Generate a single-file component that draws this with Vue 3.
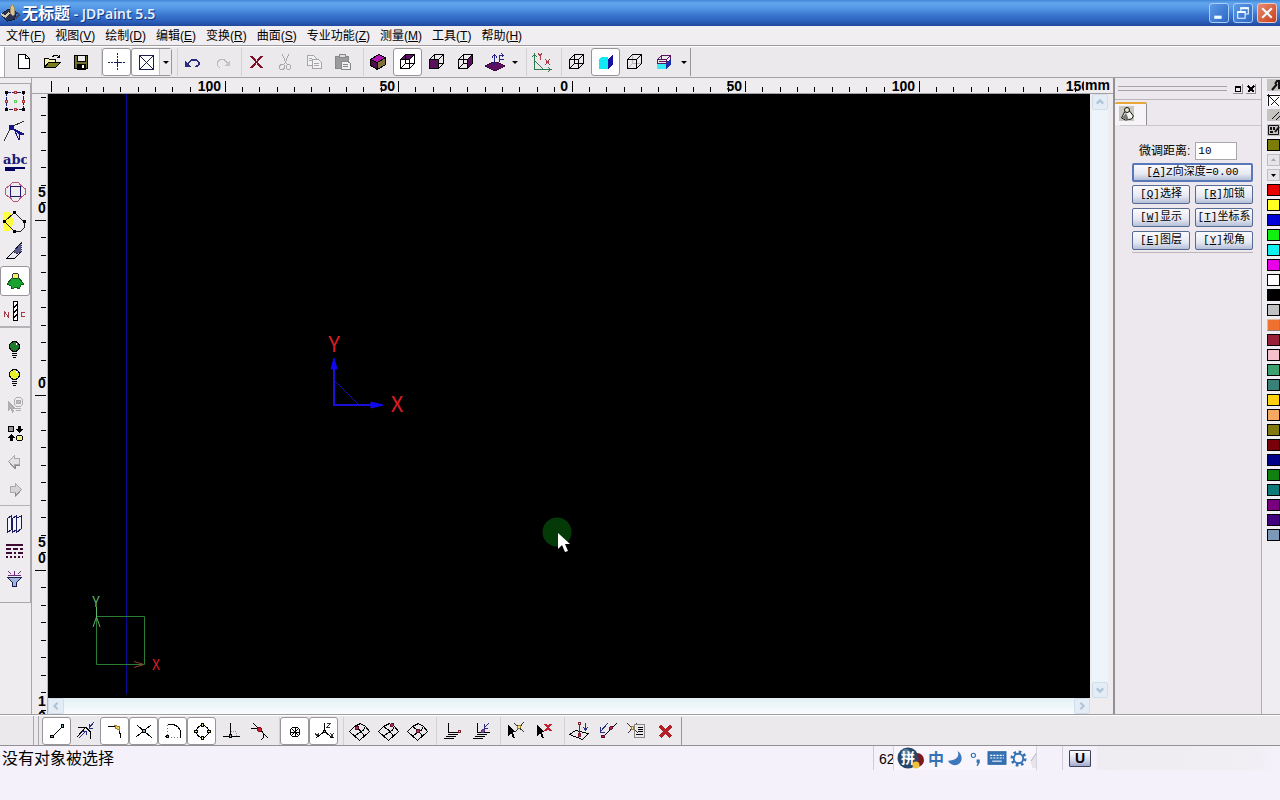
<script setup>
import { ref } from 'vue'

const menus = [
  ['文件', 'F'], ['视图', 'V'], ['绘制', 'D'], ['编辑', 'E'], ['变换', 'R'],
  ['曲面', 'S'], ['专业功能', 'Z'], ['测量', 'M'], ['工具', 'T'], ['帮助', 'H'],
]

const wire = '<path d="M4.5 9.5h9v9h-9zM9.5 4.5h9v9h-9zM4.5 9.5l5-5M13.5 9.5l5-5M13.5 18.5l5-5M4.5 18.5l5-5"/>'
const grid = '<path d="M2.5 12.5l5-5 6-3 5 3 4 5-10 9zM7.5 17l9-6 2-3.500M17.500 17l-5-6-5-3.500"/>'
const plates = '<path d="M8.500 13.500h12M7.500 15.500h10M5.500 17.500h10M3.500 19.500h10"/>'
const arrow = '<path d="M4 6v11l3-3 2 5h2l-2-6h3z" fill="#000" stroke="none"/>'

const icons = {
  app: '<path d="M3 12l6-4 9 3-2 8-8 2-5-5z" fill="#2a3350" stroke="#111a33"/><path d="M11 5l3-2 2 3v8l-2 1-3-3z" fill="#d9c48a" stroke="#8c8670"/><path d="M1 13l5 3 4-4" stroke="#d9c9a4" stroke-width="2"/><path d="M18 11l3 3-4 4" stroke="#3b4868" stroke-width="2"/>',
  new: '<path d="M6.500 4.500h7l4 4v10h-11z" fill="#fff"/><path d="M13.500 4.500v4h4"/>',
  open: '<path d="M3.500 17.500v-9h4l1 1h6v3" fill="#f3f0b0"/><path d="M3.500 17.500l4-5h12l-5 5z" fill="#7c7c20"/><path d="M11.500 6.500l2-1h3l2 2M18.500 4.500v3h-3"/>',
  save: '<path d="M4.500 5.500h13v13h-13z" fill="#6f6f2e"/><path d="M7.500 5.500h8v6h-8z" fill="#eee"/><path d="M7 14h8v5H7z" fill="#000"/><path d="M12 15h2v3h-2z" fill="#fff" stroke="none"/>',
  cross: '<g stroke="#1b2050"><path d="M3 12.500h18M12.500 3v18" stroke-dasharray="2 1"/><path d="M8.500 12.500h8M12.500 8.500v8"/></g>',
  boxx: '<path d="M5.500 5.500h14v14h-14zM5.500 5.500l14 14M19.500 5.500l-14 14" stroke="#1b2050"/>',
  undo: '<path d="M7 13l4-4h4l3 3v3l-3 2" stroke="#2a2c80"/><path d="M7 14l4-4h4l2 2v3l-3 2" stroke="#2a2c80"/><path d="M4 10v7h6z" fill="#2a2c80" stroke="none"/>',
  redo: '<path d="M10 17.500l-3-2v-3l3-3h4l4 4" stroke="#b9b9c2"/><path d="M20 10v6h-6z" fill="#c4c4cc" stroke="none"/>',
  del: '<path d="M6 6l11 12M17 6L6 18" stroke="#7b1026" stroke-width="2"/>',
  cut: '<g stroke="#a9a9ad"><path d="M8.500 4.500l4 10M14.500 4.500l-4 10"/><circle cx="8" cy="17" r="2.500"/><circle cx="14.500" cy="17" r="2.500"/></g>',
  copy: '<g stroke="#a5a5a9" fill="#f3f2f4"><path d="M4.500 5.500h6l3 3v7h-9z"/><path d="M9.500 9.500h6l3 3v6h-9z"/><path d="M6 8.500h3M6 10.500h3M11 13.500h5M11 15.500h5"/></g>',
  paste: '<path d="M3.500 6.500h13v12h-13z" fill="#9b9b9d" stroke="#888"/><path d="M7 4.500h6v3H7z" fill="#ddd" stroke="#888"/><path d="M9.500 11.500h6l3 2v6h-9z" fill="#f0f0f2" stroke="#888"/><path d="M11 14.500h5M11 16.500h5" stroke="#888"/>',
  solid: '<path d="M3.500 9.500l8-5 7 3v7l-8 5-7-4z" fill="#4a0b4a"/><path d="M3.500 9.500l8-5 7 3-8 5z" fill="#b019b0"/><path d="M10.500 12.500l8-5v7l-8 5z" fill="#84703a"/>',
  ctop: '<path d="M4.500 9.500l5-5h9l-5 5z" fill="#5b1060"/>' + wire,
  cfront: wire + '<path d="M4.500 9.500h9v9h-9z" fill="#5b1060"/>',
  cright: wire + '<path d="M13.500 9.500l5-5v9l-5 5z" fill="#5b1060"/>',
  plane: '<path d="M2 16l8-4h4l8 4-10 5z" fill="#5b1060" stroke="#3a0a40"/><path d="M11.500 15V5M9 7.500l2.500-3 2.500 3M16.500 12V5.500h4M18.500 3.500l2 2-2 2M17 9.500h4" stroke="#23238a"/>',
  axes: '<path d="M4.500 4v15.500h16M2.500 7l2-3 2 3M18 17.500l3 2-3 2M4.500 10.500l9 9" stroke="#2c7a4c"/><path d="M8 3l2 3 2-3M10 6v4M15 9l5 6M20 9l-5 6" stroke="#b13a4a"/>',
  cwire: wire,
  shaded: '<path d="M5 9l3-2h6v12H5z" fill="#10e8f5" stroke="none"/><path d="M14 9l5-5v10l-5 5z" fill="#1414a0" stroke="none"/>',
  hidden: '<path d="M9.500 5v8.500h9M4.500 18.500l5-5" stroke="#b9b9bd"/><path d="M4.500 9.500h9v9h-9zM9.500 4.500h9v9M4.500 9.500l5-5M13.500 9.500l5-5M13.500 18.500l5-5"/>',
  render: '<path d="M5 14h9v5H5z" fill="#35ecf5" stroke="none"/><path d="M5.500 9.500h9v4h-9zM5.500 9.500l4-4h9l-4 4M9.500 5.500v4M18.500 5.500v4l-4 4M7 11.500h10" stroke="#5a1560"/><path d="M14.500 13.500l4-4v5l-4 4z" fill="#1a2eb0" stroke="#1a2eb0"/>',
  select: '<path d="M3.500 3.500h17v17h-17z" stroke="#1b1b70" stroke-dasharray="4 1"/><path d="M11.500 11.500h2v2h-2z" stroke="#5bd45b"/><g fill="#000"><path d="M2.500 2.500h2v2h-2zM19.500 2.500h2v2h-2zM2.500 19.500h2v2h-2zM19.500 19.500h2v2h-2z"/></g><path d="M11.500 2.500h2v2h-2zM11.500 19.500h2v2h-2zM2.500 11.500h2v2h-2zM19.500 11.500h2v2h-2z" fill="#fbb" stroke="#a33"/>',
  node: '<path d="M1 22l7-14 13-6" stroke="#333"/><path d="M6 6h4v4H6z" fill="#15158a" stroke="#15158a"/><path d="M11 10l10 5-4 1-1 5z" fill="#dde" stroke="#15158a"/><path d="M12 11l9 4-4 1z" fill="#15158a" stroke="#15158a"/>',
  abc: '<text x="0" y="15" class="abc">abc</text><path d="M2 18.500h20M2 20.500h10" stroke="#000060" stroke-width="2"/>',
  shape: '<path d="M7.500 7.500h10v10h-10z" stroke="#1b1b70"/><path d="M7 6.500l3-3.500h5l3 3.500 4 3v6l-4 3-3 3.500h-5l-3-3.500-5-3v-6z" stroke="#c0507c"/>',
  edit: '<path d="M0 3h7l4 10-4 9H0z" fill="#ffff3c" stroke="none"/><path d="M1.500 12.500l10-9 10 10v5l-4 4h-6l-10-10" stroke="#222"/><path d="M10 2h3v3h-3zM0 11h3v3H0zM20 11h3v3h-3zM10 21h3v3h-3z" fill="#000" stroke="none"/>',
  surf: '<path d="M3.500 19.500l7-7 7-8v9l-6 6z" fill="#e8e8f4"/><path d="M10 13l8-9v9l-4 2z" fill="#5a5a90" stroke="#223" stroke-dasharray="1 1"/>',
  relief: '<path d="M4 15l6-7h5l6 7-3 1-2 4-3-2-4 2-1-3z" fill="#17a32d" stroke="#0a5c18"/><circle cx="12.500" cy="7" r="3" fill="#f8f060" stroke="#333"/>',
  nc: '<path d="M10.500 2.500h4v19h-4z" fill="#fff"/><path d="M10.500 9l4-4M10.500 14l4-4M10.500 19l4-4" stroke-width="2"/><path d="M1.500 18v-5l4 5v-5M22 13.500h-4v4h4" stroke="#a33b48"/>',
  bulb1: '<circle cx="11.500" cy="9.500" r="5" fill="#1f7a2c"/><path d="M13 6v2" stroke="#fff"/><path d="M9 16.500h5M9 18.500h5M10 20.500h3"/>',
  bulb2: '<circle cx="11.500" cy="9.500" r="5" fill="#e9f02a"/><path d="M13 6v2" stroke="#fff"/><path d="M9 16.500h5M9 18.500h5M10 20.500h3"/>',
  bulb3: '<g stroke="#adadb0"><circle cx="15.500" cy="9" r="4.500"/><circle cx="15.500" cy="9" r="2" fill="#bbb"/><path d="M13 15.500h5M13 17.500h5"/><path d="M5.500 9v8l2-2 2 4 1-1-2-3h3z" fill="#b2b2b4"/></g>',
  swap: '<circle cx="8" cy="8" r="3" fill="#999"/><circle cx="16.500" cy="17" r="3" fill="#f0ef80"/><path d="M15 5h3v3h2l-3.500 4L13 8h2zM7 20h3v-3h2l-3.500-4L5 17h2z" fill="#000" stroke="none"/>',
  left: '<path d="M5.500 12.500l6-6v3h5v6h-5v4z" fill="#e2e2e4" stroke="#aaa"/><path d="M6 13l6 6v-3h5" stroke="#888"/>',
  right: '<path d="M18.500 12.500l-6-6v3h-5v6h5v4z" fill="#d5d5d8" stroke="#aaa"/><path d="M18 13l-6 6v-3" stroke="#888"/>',
  layers: '<path d="M4.500 7.500l4-3v14l-4 3zM9.500 7.500l4-3v14l-4 3zM13.500 7.500l5-3v13l-5 4z" fill="#f4f4ff" stroke="#1b1b60"/>',
  dash: '<g stroke="#3d0a33" stroke-width="2"><path d="M3 6h17"/><path d="M3 10h17" stroke-dasharray="5 2"/><path d="M3 14h17" stroke-dasharray="6 2 2 2"/><path d="M3 18h17" stroke-dasharray="2 2"/></g>',
  filter: '<path d="M4.500 10.500h14l-5 5v4h-4v-4z" fill="#9fb6dd" stroke="#1b1b50"/><path d="M5.500 4l2 3M11.500 4v4M17.500 4l-2 3M5 8.500h13" stroke="#702a78"/>',
  line: '<path d="M7.500 17.500l10-10"/><circle cx="7" cy="17.500" r="1.500" fill="#8ab"/><circle cx="17.500" cy="7" r="1.500" fill="#8ab"/>',
  near: '<path d="M4 8.500h8l4 4v7M12 8l-9 10"/><path d="M20 3l-5 6M15 5v4h4M5 19l7-7M8 12h4v4" stroke="#2a2c80"/>',
  end: '<path d="M5 7.500h7l4 3 2 8"/><path d="M12 6.500l4 1 1 4-4-2z" fill="#f0d060" stroke="#9a7a20"/>',
  inter: '<path d="M5 6l15 13M4 18l15-12"/><path d="M10.500 10.500h3v3h-3z" fill="#8ab"/>',
  arc: '<path d="M6.500 5.500h6l4 2 3 4v7"/><path d="M6.500 6v11M7 18.500h12" stroke="#777" stroke-dasharray="1 2"/><circle cx="6.500" cy="17.500" r="1.500" fill="#8a8"/>',
  quad: '<circle cx="12.500" cy="12.500" r="6"/><g fill="#f8e68a"><circle cx="12.500" cy="6" r="1.500"/><circle cx="12.500" cy="19" r="1.500"/><circle cx="6" cy="12.500" r="1.500"/><circle cx="19" cy="12.500" r="1.500"/></g>',
  perp: '<path d="M11.500 4v12M4 17.500h17"/><path d="M12 12.500h5v5" stroke="#999" stroke-dasharray="1 1"/><circle cx="11.500" cy="17" r="1.500" fill="#8ab"/>',
  tang: '<path d="M5 4l15 15M3 9l9 1 3 4v5l-2 2"/><circle cx="11.500" cy="10.500" r="2" fill="#c02030" stroke="#801020"/>',
  centre: '<path d="M9.500 8.500h5l2 2v5l-2 2h-5l-2-2v-5zM9 10l6 6M15 10l-6 6M8 13h8M12 9v8"/>',
  xyz: '<path d="M12.500 4v8M12 13l-8 6M13 13l8 6"/><path d="M15 4.500h3l-3 4h3M3 14l2 3 2-3M18 14l4 5M22 14l-4 5" stroke="#333"/><circle cx="12.500" cy="12.500" r="1" fill="#8ab"/>',
  g1: grid + '<circle cx="10" cy="9" r="1.500" fill="#b03058" stroke="#601030"/>',
  g2: grid + '<circle cx="16" cy="6" r="1.500" fill="#b03058" stroke="#601030"/>',
  g3: grid + '<circle cx="13" cy="12" r="1.500" fill="#b03058" stroke="#601030"/>',
  p1: plates + '<path d="M8.500 4v9.500"/><path d="M18.500 11.500h2v2h-2z" fill="#ecc" stroke="#802030"/>',
  p2: plates + '<path d="M8.500 4v9.500"/><path d="M20 4l-5 5M15 5v4h4" stroke="#2a2c80"/><circle cx="14" cy="12" r="1.500" fill="#8a4a98" stroke="#503080"/>',
  s1: arrow + '<path d="M10 4l10 9M20 3l-9 10" stroke="#333"/><circle cx="15" cy="8" r="1.500" fill="#f8e68a" stroke="#a08020"/>',
  s2: arrow + '<path d="M12 5l6 7M18 5l-6 7" stroke="#c02030" stroke-width="2"/>',
  d1: '<path d="M1.500 15.500l6-4 13 3-6 6z"/><path d="M11.500 6v10" stroke="#802030"/><path d="M17.500 4v6M15 8l2.500 3 2.500-3" stroke="#2a2c80"/><path d="M10.500 3.500h2v2h-2z" stroke="#802030"/><circle cx="11.500" cy="16" r="1.500" fill="#c02050" stroke="#802030"/>',
  d2: '<path d="M5 19L20 4"/><path d="M11 4l-8 9M3 8v5h5" stroke="#2a2c80"/><circle cx="6" cy="17.500" r="1.500" fill="#c02050" stroke="#601030"/><circle cx="14" cy="9" r="1.500" fill="#c02050" stroke="#601030"/>',
  d3: '<path d="M1 4l11 10M11 4L2 14" stroke="#333"/><circle cx="6.500" cy="9" r="1.500" fill="#f8e68a" stroke="#a08020"/><path d="M8.500 5.500h10v13h-10z" stroke="#888"/><path d="M12 8.500h5M12 10.500h5M12 12.500h5M10 15.500h7"/>',
  d4: '<path d="M5 7l11 11M16 7L5 18" stroke="#b51f2a" stroke-width="4"/>',
}

const topGroups = [
  [['new', '新建'], ['open', '打开'], ['save', '保存']],
  [['cross', '十字光标', 'on'], ['boxx', '选择框', 'on', 'drop']],
  [['undo', '撤销'], ['redo', '重做']],
  [['del', '删除'], ['cut', '剪切'], ['copy', '复制'], ['paste', '粘贴']],
  [['solid', '轴测图'], ['ctop', '俯视图', 'on'], ['cfront', '前视图'], ['cright', '右视图'], ['plane', '绘图面', '', 'drop']],
  [['axes', '坐标系']],
  [['cwire', '线框'], ['shaded', '着色', 'on'], ['hidden', '消隐'], ['render', '渲染', '', 'drop']],
]
const leftA = [['select', '选择'], ['node', '节点'], ['abc', '文字'], ['shape', '图形'], ['edit', '修改'], ['surf', '曲面'], ['relief', '浮雕', 'on'], ['nc', '加工']]
const leftB = [['bulb1', '显示'], ['bulb2', '全部显示'], ['bulb3', '隐藏'], ['swap', '切换'], ['left', '后退'], ['right', '前进']]
const leftC = [['layers', '图层'], ['dash', '线型'], ['filter', '过滤']]
const snapGroups = [
  [['line', '端点', 'on'], ['near', '最近点'], ['end', '终点', 'on'], ['inter', '交点', 'on'], ['arc', '圆心', 'on'], ['quad', '象限点', 'on'], ['perp', '垂足'], ['tang', '切点']],
  [['centre', '中心', 'on'], ['xyz', '三维捕捉', 'on']],
  [['g1', '面边'], ['g2', '面角'], ['g3', '面心']],
  [['p1', '平面'], ['p2', '平面投影']],
  [['s1', '选取点'], ['s2', '取消选取']],
  [['d1', '投影'], ['d2', '线上点'], ['d3', '点列表'], ['d4', '关闭捕捉']],
]

const hTicks = Array.from({ length: 60 }, (_, i) => ({ x: Math.round(3 + 17.35 * i), major: i % 10 === 0 }))
const hLabels = ['100', '50', '0', '50', '100', '150'].map((t, i) => ({ t, x: Math.round(173 + 173.5 * i) }))
const vTicks = Array.from({ length: 60 }, (_, i) => ({ y: Math.round(3 + 17.5 * i), major: i % 10 === 7 }))
const vLabels = [['5', 103], ['0', 119], ['0', 294], ['5', 453], ['0', 469], ['1', 612], ['0', 627]]

const fine = ref('10')
const keys = [['Q', '选择'], ['R', '加锁'], ['W', '显示'], ['T', '坐标系'], ['E', '图层'], ['Y', '视角']]
const colours = [
  '#e80000', '#ffff20', '#0000d8', '#10f010', '#10f0f0', '#e800e8', '#ffffff', '#000000',
  '#c0c0c0', '#f07030', '#982038', '#f4c0cc', '#3ca070', '#388078', '#ffd010', '#f4a860',
  '#807810', '#780008', '#000088', '#108010', '#107878', '#780080', '#400080', '#7c98b8',
]
</script>

<template>
  <div class="app">
    <header class="title">
      <svg class="ic" viewBox="0 0 24 24" v-html="icons.app"></svg>
      <h1><span class="doc">无标题</span><span> - JDPaint 5.5</span></h1>
      <button class="win" aria-label="最小化"><svg viewBox="0 0 17 17"><path d="M4 12.500h7" stroke-width="3" /></svg></button>
      <button class="win" aria-label="还原"><svg viewBox="0 0 17 17"><path d="M3.500 7.500h7v6h-7zM6.500 7V3.500h7v6h-3" stroke-width="1" /><path d="M3 7.500h8M6 4h8" stroke-width="2" /></svg></button>
      <button class="win close" aria-label="关闭"><svg viewBox="0 0 17 17"><path d="M4 4l9 9M13 4l-9 9" stroke-width="2" /></svg></button>
    </header>

    <nav class="menus">
      <button v-for="m in menus" :key="m[1]">{{ m[0] }}(<u>{{ m[1] }}</u>)</button>
    </nav>

    <div class="bar top">
      <div v-for="(g, gi) in topGroups" :key="gi" class="group">
        <span v-for="b in g" :key="b[0]" class="cell" :class="{ on: b[2] }">
          <button class="tool" :aria-label="b[1]"><svg class="ic" viewBox="0 0 24 24" v-html="icons[b[0]]"></svg></button>
          <button v-if="b[3]" class="drop" :aria-label="b[1] + '选项'"><svg viewBox="0 0 12 24"><path d="M3 11h6l-3 3z" /></svg></button>
        </span>
      </div>
    </div>

    <main class="work">
      <aside class="side">
        <div class="tools">
          <div class="tall">
            <button v-for="b in leftA" :key="b[0]" class="tool" :class="{ on: b[2] }" :aria-label="b[1]"><svg class="ic" viewBox="0 0 24 24" v-html="icons[b[0]]"></svg></button>
          </div>
          <div class="short">
            <button v-for="b in leftB" :key="b[0]" class="tool" :aria-label="b[1]"><svg class="ic" viewBox="0 0 24 24" v-html="icons[b[0]]"></svg></button>
          </div>
          <div class="short last">
            <button v-for="b in leftC" :key="b[0]" class="tool" :aria-label="b[1]"><svg class="ic" viewBox="0 0 24 24" v-html="icons[b[0]]"></svg></button>
          </div>
        </div>
      </aside>

      <section class="view">
        <svg class="hruler">
          <line v-for="t in hTicks" :key="t.x" :x1="t.x + 0.5" :x2="t.x + 0.5" :y1="t.major ? 3 : 9" y2="14" />
          <text v-for="l in hLabels" :key="l.x" :x="l.x" y="13" text-anchor="end">{{ l.t }}</text>
        </svg>
        <span class="unit">mm</span>
        <svg class="vruler">
          <line v-for="t in vTicks" :key="t.y" :x1="t.major ? 3 : 9" x2="14" :y1="t.y + 0.5" :y2="t.y + 0.5" />
          <text v-for="l in vLabels" :key="l[1]" x="10" :y="l[1]" text-anchor="middle">{{ l[0] }}</text>
        </svg>
        <div class="canvas">
          <svg class="scene">
            <line x1="78.500" x2="78.500" y1="0" y2="600" stroke="#0a0a98" />
            <g fill="none" stroke="#1c10d8" stroke-width="2">
              <path d="M286 268v43h44" />
              <path d="M286 286l25 25" stroke="#1a10b8" stroke-width="1" />
              <path d="M286 264l3 11h-6zM335 311l-12-3v6z" fill="#1008f0" stroke="#1008f0" stroke-width="1" />
            </g>
            <text x="286" y="258" class="big">Y</text>
            <text x="349" y="318" class="big">X</text>
            <path d="M48.500 522.500h48v48h-48z" fill="none" stroke="#2c7c34" />
            <path d="M45 533l3.500-10 3.500 10" fill="none" stroke="#5cb86a" />
            <path d="M86 567.500l10 3-10 3" fill="none" stroke="#90402c" />
            <path d="M48.500 513v10" stroke="#5cb86a" />
            <text x="48" y="513" class="small green">Y</text>
            <text x="108" y="576" class="small">X</text>
            <circle cx="509" cy="438" r="14.500" fill="#043a08" />
            <path d="M510 439v16l4-4 3 7 3-1-3-7h5z" fill="#fff" />
          </svg>
        </div>
        <div class="vscroll">
          <button aria-label="向上"><svg viewBox="0 0 13 13"><path d="M3.500 8l3-3 3 3" /></svg></button>
          <button aria-label="向下"><svg viewBox="0 0 13 13"><path d="M3.500 5l3 3 3-3" /></svg></button>
        </div>
        <div class="hscroll">
          <button aria-label="向左"><svg viewBox="0 0 13 13"><path d="M8 3.500l-3 3 3 3" /></svg></button>
          <button aria-label="向右"><svg viewBox="0 0 13 13"><path d="M5 3.500l3 3-3 3" /></svg></button>
        </div>
      </section>

      <aside class="panel">
        <div class="grip">
          <i></i>
          <button aria-label="浮动"><svg viewBox="0 0 10 10"><path d="M2.500 2.500h5v5h-5zM2 3.500h6" /></svg></button>
          <button aria-label="关闭面板"><svg viewBox="0 0 10 10"><path d="M2 2l6 6M8 2l-6 6" stroke-width="2" /></svg></button>
        </div>
        <div class="tabs">
          <button class="tab" aria-label="浮雕参数">
            <svg viewBox="0 0 16 16"><path d="M0 0h15v15H0z" fill="#c9c8c2" /><path d="M5.500 6l-3 6 4 2 6-1 2-3-4-5z" fill="#f4f4ee" stroke="#111" /><path d="M3 12l4-5 3 7z" fill="#777" /><circle cx="8" cy="4" r="2.500" fill="#e8e8c8" stroke="#111" /></svg>
          </button>
        </div>
        <div class="sheet">
          <div class="field">
            <label for="fine">微调距离:</label>
            <input id="fine" v-model="fine" type="text" />
          </div>
          <button class="key wide">[<u>A</u>]Z向深度=0.00</button>
          <div class="keys">
            <button v-for="k in keys" :key="k[0]" class="key">[<u>{{ k[0] }}</u>]{{ k[1] }}</button>
          </div>
        </div>
      </aside>

      <aside class="palette">
        <button class="mini" aria-label="笔"><svg viewBox="0 0 13 12"><path d="M5 11l5-6M8 5l2-3h3M12 3v7" stroke-width="2" /></svg></button>
        <button class="mini blank" aria-label="无填充"><svg viewBox="0 0 13 12"><path d="M0 1.500h13M1.500 0v12M2 2l10 10M12 3L4 11" /></svg></button>
        <button class="mini" aria-label="吸管"><svg viewBox="0 0 13 12"><path d="M5 10l7-7M9 11l4-4" /></svg></button>
        <button class="mini" aria-label="填充"><svg viewBox="0 0 13 12"><path d="M1.500 1.500h10v9h-10z" /><path d="M4 3v3M7 3v3M3 8h3M12 3l-4 5" stroke-width="2" /></svg></button>
        <button class="swatch olive" aria-label="当前颜色"></button>
        <button class="mini pale" aria-label="上一页"><svg viewBox="0 0 11 10"><path d="M3 6h5L5.500 3z" fill="#aaa" stroke="none" /></svg></button>
        <button class="mini pale" aria-label="下一页"><svg viewBox="0 0 11 10"><path d="M3 4h5L5.500 7z" fill="#000" stroke="none" /></svg></button>
        <button v-for="c in colours" :key="c" class="swatch" :class="{ picked: c === '#f07030' }" :style="{ background: c }" :aria-label="'颜色 ' + c"></button>
      </aside>
    </main>

    <div class="bar snaps">
      <div v-for="(g, gi) in snapGroups" :key="gi" class="group">
        <span v-for="b in g" :key="b[0]" class="cell" :class="{ on: b[2] }">
          <button class="tool" :aria-label="b[1]"><svg class="ic" viewBox="0 0 24 24" v-html="icons[b[0]]"></svg></button>
        </span>
      </div>
    </div>

    <footer class="status">
      <p>没有对象被选择</p>
      <span class="coord">62</span>
      <div class="ime">
        <svg class="ball" viewBox="0 0 28 22"><circle cx="20" cy="13" r="7" fill="#7c1a20" /><circle cx="11" cy="11" r="10.500" fill="#27466a" /><circle cx="9" cy="7" r="5" fill="#5682a0" /><text x="11" y="16">拼</text><circle cx="19" cy="18" r="3.500" fill="#f0c23c" /></svg>
        <button class="zh">中</button>
        <button aria-label="半角"><svg viewBox="0 0 16 16"><path d="M10 1c2 5-1 9-9 9 2 5 9 6 12 1 2-4 0-8-3-10z" fill="#3f79bd" /></svg></button>
        <button aria-label="标点"><svg viewBox="0 0 16 16"><circle cx="6" cy="5" r="2" fill="none" stroke="#3472b5" stroke-width="1" /><path d="M9 9h3v3l-2 3H9l1-3H9z" fill="#3472b5" /></svg></button>
        <button class="kb" aria-label="软键盘"><svg viewBox="0 0 19 14"><path d="M1 1h17v12H1z" fill="#3472b5" stroke="#2d62a0" /><path d="M3 4.500h13M3 7h13" stroke="#fff" stroke-dasharray="2 1" /><path d="M5 10h9" stroke="#fff" /></svg></button>
        <button aria-label="设置"><svg viewBox="0 0 18 18"><circle cx="9" cy="9" r="5" fill="none" stroke="#3472b5" stroke-width="2" /><circle cx="9" cy="9" r="7" fill="none" stroke="#3472b5" stroke-width="3" stroke-dasharray="2.750 2.750" /></svg></button>
        <svg class="corner" viewBox="0 0 8 20"><path d="M7.500 4v16h-5l-2-6z" fill="#e6e4ea" /><path d="M7 4L1 13" stroke="#b4b2ba" /></svg>
      </div>
      <span class="split"></span>
      <button class="u">U</button>
      <span class="rest"></span>
    </footer>
  </div>
</template>

<style>
body { margin: 0; background: #f4f1fb; }
</style>

<style scoped>
.app {
  display: flex; flex-direction: column; height: 100vh; box-sizing: border-box; padding-bottom: 30px;
  background: #f4f1fb; color: #000; overflow: hidden;
  font: 12px/16px "Liberation Sans", "Noto Sans CJK SC", sans-serif;
}
button { margin: 0; padding: 0; border: 0; background: none; font: inherit; color: inherit; }
svg { display: block; }
.ic { width: 24px; height: 24px; fill: none; stroke: #000; stroke-width: 1; shape-rendering: crispEdges; flex: none; }
.ic :deep(.abc) { font: bold 13px "DejaVu Serif", serif; fill: #1a1a78; stroke: none; }

.title {
  display: flex; align-items: center; flex: none; height: 26px; padding-right: 3px; gap: 4px; box-sizing: border-box;
  background: linear-gradient(#3f86d6, #62a6ee 3px, #5294e4 9px, #3a76cf 15px, #2a5cb8 22px, #1f489c);
}
.title .ic { width: 22px; height: 22px; margin-right: -4px; }
.title h1 { flex: 1; margin: 0; color: #fff; font: bold 14px/24px "Noto Sans", "Noto Sans CJK SC", sans-serif; text-shadow: 1px 1px #16357c; white-space: pre; }
.title .doc { font-size: 16px; }
.title h1 span:last-child { font-weight: 600; color: #e2f0ff; }
.win { width: 20px; height: 20px; border: 1px solid #a9cdf5; border-radius: 3px; background: linear-gradient(135deg, #5d9ae8, #2c66c4); box-sizing: border-box; }
.win svg { width: 18px; height: 18px; fill: none; stroke: #eefcff; }
.win.close { background: linear-gradient(135deg, #e88a70, #c8401c); border-color: #f0c8bc; }

.menus { display: flex; flex: none; gap: 10px; height: 20px; padding: 0 6px; box-sizing: border-box; background: #f1eef1; border-bottom: 1px solid #9c9a9e; }
.menus button { line-height: 18px; white-space: nowrap; }

.bar { display: flex; flex: none; align-items: center; background: #ebe9ec; }
.top { height: 30px; padding-left: 9px; border-top: 1px solid #fff; border-bottom: 1px solid #a3a1a6; background: linear-gradient(90deg, #fff 4px, #a8a6aa 4px, #a8a6aa 5px, #ebe9ec 5px); }
.group { display: flex; padding-right: 5px; border-right: 1px solid #d3d1d5; }
.group:last-child { padding-right: 0; border-right-color: #98969a; }
.cell { display: flex; box-sizing: border-box; height: 28px; }
.cell .tool { width: 29px; height: 28px; display: flex; align-items: center; justify-content: center; }
.drop { width: 12px; }
.drop svg { width: 12px; height: 24px; }
.cell.on { border: 1px solid #98969b; border-radius: 3px; background: #fff; }
.cell.on .tool { width: 27px; height: 26px; }
.cell.on .drop { border-left: 1px solid #c4c2c6; background: #edebee; box-sizing: border-box; }

.work { display: flex; flex: 1; min-height: 0; background: #eeecef; border-bottom: 1px solid #a09ea3; }
.side { flex: none; width: 31px; border-right: 1px solid #a9a7ac; overflow: hidden; }
.tools { margin-top: 5px; border: solid #aaa8ad; border-width: 1px 1px 1px 0; }
.tall { padding-top: 2px; }
.tools .tool { display: flex; align-items: center; justify-content: center; width: 30px; height: 28px; box-sizing: border-box; }
.tall .tool { height: 30px; }
.tool.on { border: 1px solid #98969b; border-radius: 3px; background: #fff; }
.short { padding: 7px 0 2px; border-top: 2px solid #b4b2b7; }
.last { padding: 3px 0 9px; border-top-width: 1px; }

.view {
  flex: 1; min-width: 0; display: grid; position: relative;
  grid-template-columns: 16px minmax(0, 1fr) 23px; grid-template-rows: 16px minmax(0, 1fr) 16px;
}
.hruler, .vruler { overflow: hidden; fill: #000; font-weight: bold; font-size: 14px; box-sizing: border-box; }
.hruler { grid-column: 1 / 4; grid-row: 1; width: 100%; height: 16px; padding-left: 16px; border-bottom: 1px solid #a3a1a6; }
.hruler line, .vruler line { stroke: #000; stroke-width: 1; }
.unit { position: absolute; right: 3px; top: 0; padding-left: 1px; background: #eeecef; font: bold 14px/15px "Liberation Sans", sans-serif; }
.vruler { grid-column: 1; grid-row: 2 / 4; width: 16px; height: 100%; border-right: 1px solid #b6b4b9; }
.canvas { grid-column: 2; grid-row: 2; background: #000; overflow: hidden; }
.scene { width: 100%; height: 100%; }
.scene text { font-family: "Noto Sans CJK SC", sans-serif; text-anchor: middle; fill: #d81c24; }
.scene .big { font-size: 22px; }
.scene .small { font-size: 14px; }
.scene .green { fill: #5cb86a; }
.vscroll { grid-column: 3; grid-row: 2; display: flex; flex-direction: column; justify-content: space-between; width: 16px; margin-left: 2px; background: #edf5fa; }
.hscroll { grid-column: 2; grid-row: 3; display: flex; justify-content: space-between; background: linear-gradient(#e4f0f5, #fafdfe); }
.vscroll button, .hscroll button { width: 16px; height: 16px; border: 1px solid #cfdeea; border-radius: 2px; background: #e4edf5; box-sizing: border-box; }
.vscroll svg, .hscroll svg { width: 14px; height: 14px; fill: none; stroke: #b0c4d8; stroke-width: 2; }

.panel { flex: none; width: 149px; box-sizing: border-box; border-left: 2px solid #929095; border-right: 1px solid #b2b0b5; background: #ece8ed; }
.grip { display: flex; align-items: center; gap: 3px; height: 22px; padding: 0 5px 0 3px; border-bottom: 1px solid #b9b7bc; box-sizing: border-box; }
.grip i { flex: 1; height: 3px; border: solid #a5a3a8; border-width: 1px 0; margin-right: 3px; }
.grip button { width: 10px; height: 10px; border: solid #908e93; border-width: 0 1px 1px 0; }
.grip svg { width: 10px; height: 10px; fill: none; stroke: #000; stroke-width: 1; shape-rendering: crispEdges; }
.tabs { display: flex; margin-top: 2px; }
.tab { width: 32px; height: 23px; padding: 0 4px 2px; border-top: 2px solid #e8a838; border-right: 1px solid #908e93; border-radius: 2px 2px 0 0; background: #f7f4f7; box-sizing: border-box; }
.tab svg { width: 16px; height: 16px; }
.sheet { margin-left: 5px; padding: 15px 8px 0 12px; border-top: 1px solid #c9c7cc; }
.field { display: flex; align-items: center; gap: 5px; padding-left: 7px; height: 19px; white-space: nowrap; }
.field label { flex: none; }
.field input { width: 42px; height: 18px; box-sizing: border-box; padding: 0 2px; border: 1px solid #a9a7ac; background: #fff; font: 11px/16px "Liberation Mono", monospace; }
.key {
  height: 19px; border: 1px solid #556a94; border-radius: 2px; box-sizing: border-box; white-space: nowrap; overflow: hidden;
  background: linear-gradient(#fbfbfe, #e6e8f2 60%, #b4bfd8); font: 11px/15px "Liberation Mono", "Noto Sans CJK SC", monospace;
}
.wide { display: block; width: 100%; margin-top: 3px; border: 2px solid #5878b8; line-height: 13px; }
.keys { display: grid; grid-template-columns: 1fr 1fr; gap: 4px 5px; padding: 3px 0 2px; border-bottom: 1px solid #b9b7bc; }

.palette { flex: none; display: flex; flex-direction: column; align-items: flex-end; gap: 3px; width: 18px; padding-top: 1px; box-sizing: border-box; background: #efedf2; overflow: hidden; }
.palette button { flex: none; width: 13px; height: 12px; box-sizing: border-box; }
.swatch { border: 1px solid #000; }
.olive { background: #7c7c08; }
.palette .picked { border-color: #e0b898 #908070 #908070 #e0b898; }
.mini { background: #c6c4c0; }
.mini.blank { background: #fff; }
.mini.pale { background: #e6e4e8; border: 1px solid #c0bec3; }
.mini svg { width: 13px; height: 12px; fill: none; stroke: #111; stroke-width: 1; }
.mini.pale svg { width: 11px; height: 10px; }

.snaps { height: 31px; padding-left: 42px; border-top: 1px solid #fff; border-bottom: 1px solid #929095; box-sizing: border-box; background: linear-gradient(90deg, transparent 33px, #aaa8ad 33px, #aaa8ad 34px, transparent 34px, transparent 38px, #aaa8ad 38px, #aaa8ad 39px, transparent 39px), #ebe9eb; }

.status { display: flex; flex: none; height: 24px; align-items: stretch; }
.status p { flex: 1; margin: 0; padding: 2px 0 0 2px; font-size: 16px; line-height: 22px; }
.coord { width: 14px; padding-left: 5px; border-left: 1px solid #cfccd6; overflow: hidden; font-size: 14px; line-height: 26px; }
.ime { display: flex; align-items: center; gap: 3px; width: 144px; box-sizing: border-box; padding-left: 3px; border: 1px solid #d4d2da; border-width: 0 1px; background: #f8f6fc; overflow: hidden; }
.ime svg { width: 17px; height: 17px; flex: none; }
.ime .ball { width: 28px; height: 22px; }
.ball text { font: bold 14px "Noto Sans CJK SC", sans-serif; fill: #fff; text-anchor: middle; }
.ime .kb svg { width: 20px; height: 16px; }
.zh { color: #3472b5; font: bold 16px/20px "Noto Sans CJK SC", sans-serif; }
.ime .corner { width: 8px; height: 20px; }
.split { width: 25px; border-right: 1px solid #d2cfd9; }
.u { align-self: center; width: 22px; height: 17px; margin: 0 6px; border: 1px solid #3c4258; border-radius: 1px; background: linear-gradient(#fff, #d4d8ec 60%, #a0a8cc); font-weight: bold; font-size: 14px; line-height: 14px; box-sizing: border-box; }
.rest { width: 183px; background: linear-gradient(90deg, #efedf1, #f1eef4 160px, #f4f1fb); }
</style>
